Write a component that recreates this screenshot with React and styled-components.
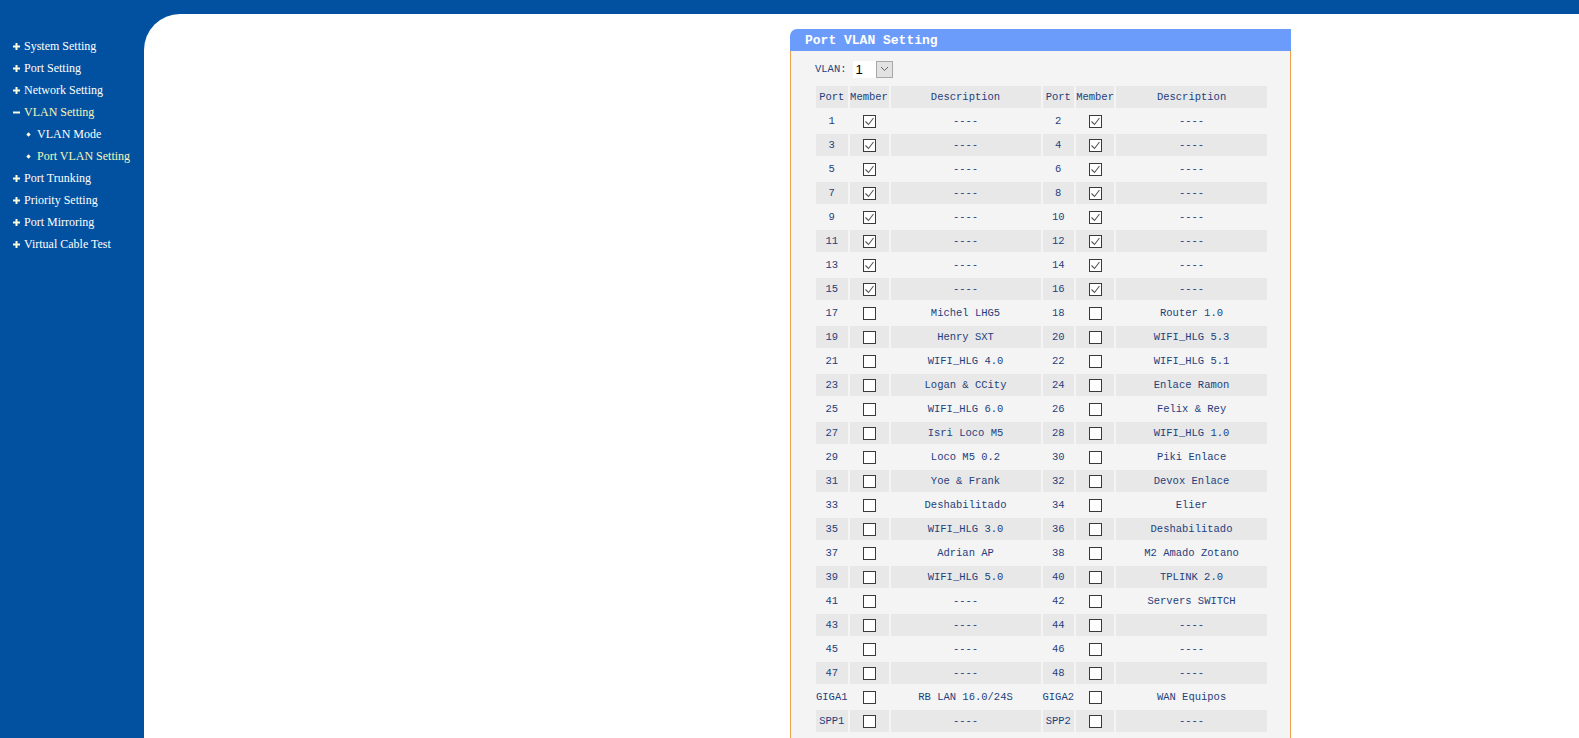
import React from "react";
import styled, { createGlobalStyle } from "styled-components";

const GlobalStyle = createGlobalStyle`
  html, body {
    margin: 0;
    padding: 0;
    background: #0251a1;
  }
`;

const menu = [
  { label: "System Setting" },
  { label: "Port Setting" },
  { label: "Network Setting" },
  {
    label: "VLAN Setting",
    open: true,
    active: true,
    children: [
      { label: "VLAN Mode" },
      { label: "Port VLAN Setting", active: true },
    ],
  },
  { label: "Port Trunking" },
  { label: "Priority Setting" },
  { label: "Port Mirroring" },
  { label: "Virtual Cable Test" },
];

const names = {
  17: "Michel LHG5",
  18: "Router 1.0",
  19: "Henry SXT",
  20: "WIFI_HLG 5.3",
  21: "WIFI_HLG 4.0",
  22: "WIFI_HLG 5.1",
  23: "Logan & CCity",
  24: "Enlace Ramon",
  25: "WIFI_HLG 6.0",
  26: "Felix & Rey",
  27: "Isri Loco M5",
  28: "WIFI_HLG 1.0",
  29: "Loco M5 0.2",
  30: "Piki Enlace",
  31: "Yoe & Frank",
  32: "Devox Enlace",
  33: "Deshabilitado",
  34: "Elier",
  35: "WIFI_HLG 3.0",
  36: "Deshabilitado",
  37: "Adrian AP",
  38: "M2 Amado Zotano",
  39: "WIFI_HLG 5.0",
  40: "TPLINK 2.0",
  42: "Servers SWITCH",
  GIGA1: "RB LAN 16.0/24S",
  GIGA2: "WAN Equipos",
};

const ports = [];
for (let i = 1; i <= 48; i++) ports.push(i);
ports.push("GIGA1", "GIGA2", "SPP1", "SPP2");

const rows = [];
for (let i = 0; i < ports.length; i += 2) {
  rows.push([ports[i], ports[i + 1]]);
}

const portInfo = (p) => ({
  port: p,
  member: typeof p === "number" && p <= 16,
  desc: names[p] || "----",
});

const Page = styled.div`
  min-height: 100vh;
  display: flex;
  flex-direction: column;
  background: #0251a1;
`;

const TopBar = styled.div`
  height: 14px;
  flex-shrink: 0;
`;

const Main = styled.div`
  flex: 1;
  display: flex;
`;

const Sidebar = styled.ul`
  width: 144px;
  flex-shrink: 0;
  margin: 0;
  padding: 21px 0 0 0;
  list-style: none;
  font-family: "Liberation Serif", "Times New Roman", serif;
  font-size: 12px;
`;

const MenuItem = styled.li`
  display: flex;
  align-items: center;
  height: 22px;
  padding-left: ${(p) => (p.$sub ? 26 : 13)}px;
  color: ${(p) => (p.$active ? "#f4f7b8" : "#ffffff")};
  white-space: nowrap;
`;

const Bullet = styled.span`
  width: 11px;
  display: inline-flex;
  align-items: center;
  flex-shrink: 0;
`;

const Content = styled.div`
  flex: 1;
  background: #ffffff;
  border-top-left-radius: 36px;
  padding: 15px 0 0 646px;
`;

const Panel = styled.div`
  width: 501px;
  display: flex;
  flex-direction: column;
`;

const PanelHeader = styled.div`
  height: 22px;
  background: #6b9cfb;
  border-top-left-radius: 7px;
  color: #ffffff;
  font-family: "Liberation Mono", "Courier New", monospace;
  font-weight: bold;
  font-size: 13px;
  display: flex;
  align-items: center;
  padding-left: 15px;
`;

const PanelBody = styled.div`
  background: #f4f4f4;
  border-left: 1px solid #eda24d;
  border-right: 1px solid #eda24d;
  padding: 9px 0 40px 24px;
  font-family: "Liberation Mono", "Courier New", monospace;
  font-size: 10.5px;
  color: #1f3f7d;
`;

const VlanRow = styled.div`
  display: flex;
  align-items: center;
  height: 18px;
  margin-bottom: 6px;
`;

const VlanLabel = styled.span`
  margin-right: 6px;
`;

const SelectBox = styled.div`
  display: flex;
  align-items: stretch;
  height: 17px;
  background: #ffffff;
`;

const SelectValue = styled.span`
  width: 23px;
  padding-left: 3px;
  box-sizing: border-box;
  font-family: "Liberation Sans", Arial, sans-serif;
  font-size: 13px;
  color: #000000;
  display: flex;
  align-items: center;
`;

const SelectButton = styled.span`
  width: 17px;
  box-sizing: border-box;
  background: #e2e2e2;
  border: 1px solid #a8a8a8;
  display: flex;
  align-items: center;
  justify-content: center;
`;

const Table = styled.table`
  border-collapse: separate;
  border-spacing: 2px;
  margin-left: -1px;
  table-layout: fixed;
`;

const Cell = styled.td`
  height: 22px;
  padding: 0;
  width: ${(p) => p.$w}px;
  text-align: center;
  white-space: nowrap;
  background: ${(p) => (p.$shade ? "#e8e8e8" : "transparent")};
`;

const HeadCell = styled(Cell).attrs({ as: "th" })`
  font-weight: normal;
  background: #e8e8e8;
`;

const Box = styled.span`
  display: inline-flex;
  align-items: center;
  justify-content: center;
  width: 13px;
  height: 13px;
  box-sizing: border-box;
  border: 1px solid #3a3a3a;
  background: #ffffff;
  vertical-align: middle;
`;

function Plus({ minus }) {
  return (
    <svg width="7" height="7" viewBox="0 0 7 7">
      <rect x="0" y="2.5" width="7" height="2" fill="#fbfbd8" />
      {!minus && <rect x="2.5" y="0" width="2" height="7" fill="#fbfbd8" />}
    </svg>
  );
}

function Dot() {
  return (
    <svg width="5" height="5" viewBox="0 0 5 5">
      <polygon points="2.5,0.3 4.7,2.5 2.5,4.7 0.3,2.5" fill="#fbfbd8" />
    </svg>
  );
}

function CheckBox({ checked }) {
  return (
    <Box>
      {checked && (
        <svg width="11" height="11" viewBox="0 0 11 11">
          <polyline points="1.5,5.5 4.5,8.5 9.5,2" fill="none" stroke="#555" strokeWidth="1.1" />
        </svg>
      )}
    </Box>
  );
}

const widths = [31, 39, 150, 31, 38, 151];

function PortCells({ info, shade, first }) {
  const o = first ? 0 : 3;
  return (
    <>
      <Cell $w={widths[o]} $shade={shade}>{info.port}</Cell>
      <Cell $w={widths[o + 1]} $shade={shade}>
        <CheckBox checked={info.member} />
      </Cell>
      <Cell $w={widths[o + 2]} $shade={shade}>{info.desc}</Cell>
    </>
  );
}

function App() {
  return (
    <Page>
      <GlobalStyle />
      <TopBar />
      <Main>
        <Sidebar>
          {menu.map((m) => (
            <React.Fragment key={m.label}>
              <MenuItem $active={m.active}>
                <Bullet>
                  <Plus minus={m.open} />
                </Bullet>
                {m.label}
              </MenuItem>
              {m.open &&
                m.children.map((c) => (
                  <MenuItem key={c.label} $sub $active={c.active}>
                    <Bullet>
                      <Dot />
                    </Bullet>
                    {c.label}
                  </MenuItem>
                ))}
            </React.Fragment>
          ))}
        </Sidebar>
        <Content>
          <Panel>
            <PanelHeader>Port VLAN Setting</PanelHeader>
            <PanelBody>
              <VlanRow>
                <VlanLabel>VLAN:</VlanLabel>
                <SelectBox>
                  <SelectValue>1</SelectValue>
                  <SelectButton>
                    <svg width="9" height="6" viewBox="0 0 9 6">
                      <polyline points="1,1 4.5,4.5 8,1" fill="none" stroke="#666" strokeWidth="1" />
                    </svg>
                  </SelectButton>
                </SelectBox>
              </VlanRow>
              <Table>
                <thead>
                  <tr>
                    <HeadCell $w={widths[0]}>Port</HeadCell>
                    <HeadCell $w={widths[1]}>Member</HeadCell>
                    <HeadCell $w={widths[2]}>Description</HeadCell>
                    <HeadCell $w={widths[3]}>Port</HeadCell>
                    <HeadCell $w={widths[4]}>Member</HeadCell>
                    <HeadCell $w={widths[5]}>Description</HeadCell>
                  </tr>
                </thead>
                <tbody>
                  {rows.map(([a, b], i) => (
                    <tr key={a}>
                      <PortCells info={portInfo(a)} shade={i % 2 === 1} first />
                      <PortCells info={portInfo(b)} shade={i % 2 === 1} />
                    </tr>
                  ))}
                </tbody>
              </Table>
            </PanelBody>
          </Panel>
        </Content>
      </Main>
    </Page>
  );
}

export default App;
